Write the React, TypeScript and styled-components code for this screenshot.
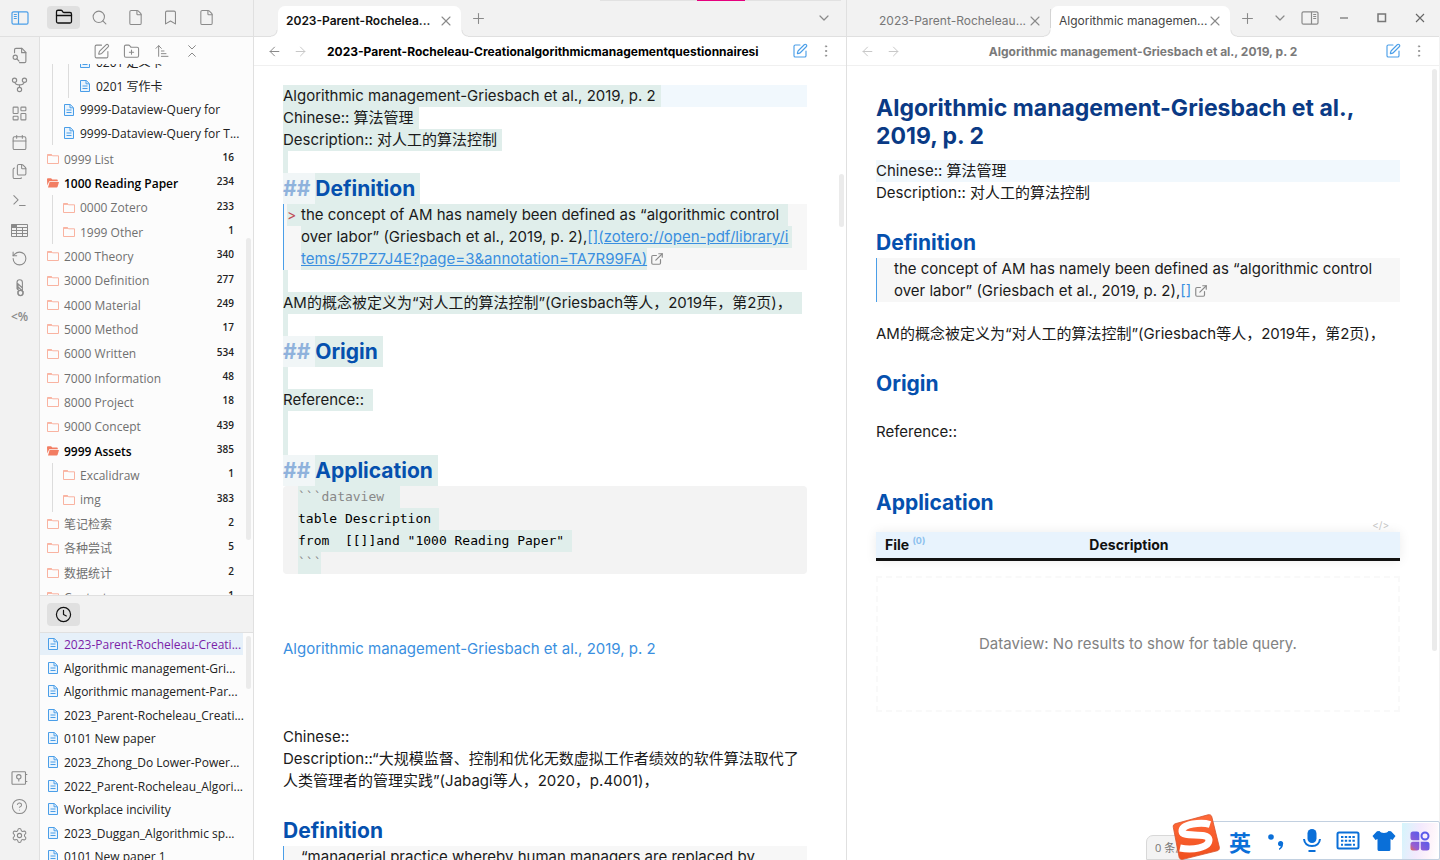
import React from "react";
import styled, { createGlobalStyle, css } from "styled-components";
import {
  ArrowLeft, ArrowRight, ArrowUpNarrowWide, Bookmark, Calendar, ChevronDown, ChevronsDownUp,
  CircleQuestionMark, Clock, EllipsisVertical, ExternalLink, File, Files, FolderClosed,
  FolderPlus, LayoutDashboard, Plus, RotateCcw, Search, Settings, SquarePen, Terminal, X,
} from "lucide-react";

const ui = `"Open Sans", "Noto Sans CJK SC", sans-serif`;
const inter = `Inter, "Noto Sans CJK SC", sans-serif`;
const line = "#e0e0e0";
const blue = "#4a9ee8";
const selection = "#e0eeeb";

const Global = createGlobalStyle`
  *, *::before, *::after { box-sizing: border-box; }
  html, body, #root { height: 100%; }
  body { margin: 0; overflow: hidden; background: #fff; font-family: ${inter}; color: #222; }
  button { border: 0; padding: 0; background: none; font: inherit; color: inherit; cursor: pointer; }
  h1, h2, p { margin: 0; }
`;

const Shell = styled.div`
  position: relative;
  display: flex;
  height: 100vh;
  overflow: hidden;
`;

const LeftArea = styled.div`
  display: grid;
  grid-template: 37px 1fr / 40px 214px;
  flex: none;
  height: 100%;
  background: #f2f2f2;
`;

const IconButton = styled.button<{ $color?: string; $w?: number; $h?: number; $on?: boolean }>`
  display: flex;
  align-items: center;
  justify-content: center;
  flex: none;
  width: ${(p) => p.$w ?? 26}px;
  height: ${(p) => p.$h ?? 24}px;
  color: ${(p) => p.$color ?? "#8a8a8a"};
  ${(p) => p.$on && css`background: #e0e0e0; border-radius: 4px; color: #111;`}
`;

const Corner = styled.div`
  display: flex;
  align-items: center;
  justify-content: center;
  border-bottom: 1px solid ${line};
`;

const SideTabs = styled.div`
  display: flex;
  align-items: center;
  justify-content: space-between;
  padding: 0 30px 2px 7px;
  border-right: 1px solid ${line};
  border-bottom: 1px solid ${line};
`;

const Ribbon = styled.nav`
  display: flex;
  flex-direction: column;
  align-items: center;
  padding: 4px 0 10px;
  border-right: 1px solid ${line};
`;

const Spacer = styled.div`
  flex: 1;
`;

const TemplaterMark = styled.span`
  font: 600 12px/16px ${ui};
`;

const Sidebar = styled.aside`
  display: flex;
  flex-direction: column;
  min-height: 0;
  background: #fcfcfc;
  border-right: 1px solid ${line};
  font-family: ${ui};
  font-size: 12px;
`;

const NavActions = styled.div`
  display: flex;
  justify-content: center;
  gap: 4px;
  flex: none;
  height: 27px;
  padding: 2px 0 0;
`;

const Scroller = styled.div<{ $grow: number }>`
  position: relative;
  flex: ${(p) => p.$grow} 1 0;
  min-height: 0;
  overflow: hidden;
`;

const Thumb = styled.div<{ $top: number; $height: number }>`
  position: absolute;
  top: ${(p) => p.$top}px;
  right: 2px;
  width: 5px;
  height: ${(p) => p.$height}px;
  border-radius: 3px;
  background: #ebebeb;
`;

const FileList = styled.div`
  margin-top: -14px;
`;

const FolderList = styled.div`
  margin-top: 2px;
`;

const Row = styled.a<{ $kind: "file" | "folder" }>`
  display: flex;
  align-items: center;
  height: 24px;
  padding: 0 19px 0 7px;
  color: #222;
  text-decoration: none;
  white-space: nowrap;
  &:nth-child(3n) {
    height: ${(p) => (p.$kind === "file" ? 23 : 25)}px;
  }
`;

const Guide = styled.span`
  align-self: stretch;
  flex: none;
  width: 11px;
  margin-left: 5px;
  border-left: 1px solid #dcdcdc;
`;

const RowName = styled.span<{ $tone?: "muted" | "open" }>`
  margin-left: 5px;
  ${(p) => p.$tone === "muted" && css`color: #707070;`}
  ${(p) => p.$tone === "open" && css`color: #000; font-weight: 600;`}
`;

const Count = styled.span`
  margin-left: auto;
  padding-bottom: 4px;
  font-size: 10px;
  font-weight: 600;
  color: #222;
`;

const RecentTabs = styled.div`
  display: flex;
  align-items: center;
  flex: none;
  height: 38px;
  padding: 0 7px;
  background: #f2f2f2;
  border-top: 1px solid ${line};
  border-bottom: 1px solid ${line};
`;

const RecentRow = styled.a<{ $active?: boolean }>`
  display: flex;
  align-items: center;
  height: 22px;
  margin: 0 10px 2px 0;
  padding-left: 7px;
  color: #222;
  text-decoration: none;
  white-space: nowrap;
  &:nth-child(5n + 2), &:nth-child(5n + 4) { margin-bottom: 1px; }
  ${(p) => p.$active && css`background: #e6f0f9; color: #7b1fa8;`}
`;

const Pane = styled.section`
  display: flex;
  flex-direction: column;
  flex: 1 1 0;
  min-width: 0;
  border-right: 1px solid ${line};
  &:last-of-type { border-right-color: #f2f2f2; }
`;

const TabBar = styled.header`
  position: relative;
  display: flex;
  align-items: center;
  flex: none;
  height: 37px;
  padding-left: 24px;
  background: #f2f2f2;
  border-bottom: 1px solid ${line};
`;

const Tab = styled.div<{ $active?: boolean; $strong?: boolean }>`
  position: relative;
  display: flex;
  align-items: center;
  align-self: flex-end;
  flex: none;
  width: ${(p) => (p.$strong ? 183 : 179)}px;
  height: 31px;
  margin-bottom: -1px;
  padding: 0 7px 2px 8px;
  border-radius: 7px 7px 0 0;
  font-size: 12px;
  font-weight: ${(p) => (p.$strong ? 600 : 400)};
  color: ${(p) => (p.$strong ? "#111" : p.$active ? "#444" : "#777")};
  ${(p) => p.$active && css`
    background: #fff;
    &::before, &::after {
      content: "";
      position: absolute;
      bottom: 0;
      width: 7px;
      height: 7px;
    }
    &::before { left: -7px; background: radial-gradient(circle at 0 0, transparent 5px, ${line} 6px, #fff 7px); }
    &::after { right: -7px; background: radial-gradient(circle at 100% 0, transparent 5px, ${line} 6px, #fff 7px); }
  `}
`;

const TabName = styled.span`
  flex: 1;
  white-space: nowrap;
`;

const TabDivider = styled.span`
  width: 1px;
  height: 19px;
  background: #d4d4d4;
`;

const Progress = styled.div`
  position: absolute;
  top: 0;
  right: 5px;
  display: flex;
  justify-content: center;
  width: 241px;
  height: 1px;
  background: #e2e2e2;
  &::after { content: ""; width: 48px; background: #e6007e; }
`;

const ViewHeader = styled.div`
  display: flex;
  align-items: center;
  flex: none;
  height: 29px;
  padding: 0 7px;
  border-bottom: 1px solid #f0f0f0;
`;

const ViewTitle = styled.div<{ $muted?: boolean }>`
  flex: 1;
  min-width: 0;
  overflow: hidden;
  white-space: nowrap;
  font-size: 12px;
  font-weight: 700;
  ${(p) => p.$muted
    ? css`color: #7a7a7a; text-align: center; margin: 0 14px;`
    : css`color: #000; margin: 0 8px 0 14px;`}
`;

const View = styled.div`
  position: relative;
  flex: 1;
  min-height: 0;
  overflow: hidden;
  font-size: 15px;
  font-weight: 400;
  line-height: 22px;
`;

const Doc = styled.article<{ $top: number }>`
  padding: ${(p) => p.$top}px 39px 0 29px;
`;

const Line = styled.p<{ $current?: boolean }>`
  min-height: 22px;
  white-space: pre;
  color: #1a1a1a;
  ${(p) => p.$current && css`background: #f1f8fd;`}
`;

const Sel = styled.span<{ $trail?: number; $light?: boolean }>`
  display: inline-block;
  vertical-align: top;
  min-height: 22px;
  padding-right: ${(p) => p.$trail ?? 5}px;
  background: ${(p) => (p.$light ? "#f1f6f7" : selection)};
`;

const Heading = styled.h2`
  height: 31px;
  font-size: 21px;
  font-weight: 700;
  line-height: 31px;
  color: #0550ae;
  white-space: pre;
`;

const Hash = styled.span`
  color: #8fb2dc;
`;

const Quote = styled.blockquote<{ $raw?: boolean }>`
  margin: 0;
  padding-left: ${(p) => (p.$raw ? 3 : 17)}px;
  background: #f7f7f7;
  border-left: 1px solid ${blue};
`;

const Indented = styled.div`
  padding-left: 14px;
`;

const Mark = styled.span`
  display: inline-block;
  width: 14px;
  color: #c0505a;
  font-size: 14px;
`;

const Link = styled.a<{ $plain?: boolean }>`
  color: #3a8fe0;
  text-decoration: ${(p) => (p.$plain ? "none" : "underline")};
`;

const External = styled(ExternalLink)`
  margin-left: 3px;
  vertical-align: -2px;
  color: #8a8a8a;
`;

const Code = styled.pre`
  margin: 0;
  padding: 0 15px;
  background: #f3f3f3;
  border-radius: 4px;
  font: 13px/22px "DejaVu Sans Mono", monospace;
  color: #000;
`;

const Fence = styled.span`
  color: #888;
`;

const Gap = styled.div<{ $h: number }>`
  height: ${(p) => p.$h}px;
`;

const Title = styled.h1`
  margin-bottom: 10px;
  font-size: 23px;
  font-weight: 700;
  line-height: 28px;
  color: #0a3a85;
`;

const CodeToggle = styled.button`
  display: block;
  margin: 0 11px 1px auto;
  font-size: 10px;
  font-weight: 400;
  line-height: 12px;
  color: #c4c4c4;
`;

const Table = styled.table`
  width: 100%;
  border-collapse: collapse;
  table-layout: fixed;
  background: #e8f3fd;
  box-shadow: 0 0 12px rgba(0, 0, 0, 0.08);
  th {
    height: 27px;
    padding: 0 9px;
    border-bottom: 3px solid #111;
    text-align: left;
    font-size: 14px;
    font-weight: 700;
    line-height: 22px;
    color: #111;
  }
  th:first-child { width: 39%; }
  sup { font-size: 9px; line-height: 9px; color: #8cc0ee; }
`;

const Empty = styled.div`
  display: flex;
  align-items: center;
  justify-content: center;
  height: 136px;
  margin-top: 15px;
  border: 2px dashed #f9f9f9;
  color: #828282;
`;

const StatusBar = styled.footer`
  position: absolute;
  right: 0;
  bottom: 0;
  width: 294px;
  height: 25px;
  padding: 0 8px;
  border: 1px solid #d8d8d8;
  border-radius: 7px 0 0 0;
  background: #f3f3f3;
  font: 11px/23px ${ui};
  color: #777;
`;

const InputBar = styled.div`
  position: absolute;
  right: 0;
  bottom: 0;
  display: flex;
  align-items: center;
  width: 257px;
  height: 39px;
  padding-left: 38px;
  border: 1px solid #c2d0e0;
  border-radius: 2px;
  background: #fff;
  color: #0a6fd8;
`;

const Ime = styled.button<{ $glow?: boolean }>`
  display: flex;
  align-items: center;
  justify-content: center;
  width: 36px;
  height: 36px;
  font: 700 22px/34px "Noto Sans CJK SC", sans-serif;
  ${(p) => p.$glow && css`background: linear-gradient(100deg, #d4f5fb, #f3e9fd 45%, #fdf3fa 75%, #fff);`}
`;

const Sogou = styled.svg`
  position: absolute;
  right: 219px;
  bottom: 0;
`;

const Glyph = styled.svg`
  flex: none;
`;

const FileIcon = () => (
  <Glyph width="12" height="12" viewBox="0 0 12 12" fill="#eaf4fd" stroke={blue} strokeWidth="1">
    <path d="M1.5.5h5.8l3.2 3.2v7.8h-9z" />
    <path d="M7 .8v3h3.2M3.5 6h5M3.5 8.500h5" fill="none" />
  </Glyph>
);

const FolderIcon = ({ open }: { open?: boolean }) =>
  open ? (
    <Glyph width="12" height="12" viewBox="0 0 12 12" fill="#f27d62">
      <path d="M0 2.2C0 1.6.3 1.3.9 1.3h3.2l1.2 1.2h4.6c.6 0 .9.3.9.9v.8H2.2L.3 8.6z" />
      <path d="M2.6 5H12l-1.4 4.7c-.2.5-.4.7-.9.7H1z" />
    </Glyph>
  ) : (
    <Glyph width="12" height="12" viewBox="0 0 12 12" fill="none" stroke="#f9b3a1" strokeWidth="1">
      <path d="M.5 10.5v-9h4l1 1.3h6v7.7z" />
      <path d="M.5 2.2h4.5" strokeWidth="1.4" />
    </Glyph>
  );

const PanelIcon = ({ flip }: { flip?: boolean }) => (
  <svg width="18" height="14" viewBox="0 0 18 14" fill="none" stroke="currentColor" transform={flip ? "scale(-1 1)" : undefined}>
    <rect x="1" y=".8" width="16" height="12.4" rx="1.5" strokeWidth="1.2" />
    <path d="M7.5 1v12" strokeWidth="1.2" />
    <path d="M2.8 3.5h3M2.8 5.5h3M2.8 7.5h3" />
  </svg>
);

const FindFileIcon = () => (
  <svg width="17" height="17" viewBox="0 0 24 24" fill="none" stroke="currentColor" strokeWidth="1.6" strokeLinecap="round" strokeLinejoin="round">
    <path d="M5 8V4a2 2 0 0 1 2-2h8.500L21 7.500V20a2 2 0 0 1-2 2h-7" />
    <path d="M15 2v6h6" />
    <circle cx="6" cy="14.500" r="3" />
    <path d="m8.200 16.800 3 3" />
  </svg>
);

const GraphIcon = () => (
  <svg width="17" height="17" viewBox="0 0 24 24" fill="none" stroke="currentColor" strokeWidth="1.600">
    <circle cx="5" cy="6" r="3" />
    <circle cx="19" cy="6" r="3" />
    <circle cx="12" cy="19" r="3" />
    <path d="M5.500 9c.5 2.500 2 3.500 6.500 3.500S18 11.500 18.500 9M12 12.500V16" />
  </svg>
);

const GridIcon = () => (
  <svg width="17" height="14" viewBox="0 0 17 14" fill="none" stroke="currentColor">
    <path d="M.5 1.500h16v12H.5zM.5 4.500h16M.5 7.500h16M.5 10.500h16M5.500 1.500v12M11.500 4.500v9" />
    <path d="M.5 2.500h4.500" strokeWidth="3" />
  </svg>
);

const ClipIcon = () => (
  <svg width="12" height="18" viewBox="0 0 12 18" fill="none" stroke="currentColor" strokeWidth="1.1">
    <path d="M3 10V3.500a2.700 2.700 0 0 1 5.400 0V13M3 4l5.500 5M3 7l6 5.500M4 5.500V14a2.500 2.500 0 0 0 5 0v-2M3 10l2 1.500" />
    <circle cx="6.500" cy="14" r="2.600" />
  </svg>
);

const VaultIcon = () => (
  <svg width="17" height="14" viewBox="0 0 17 14" fill="none" stroke="currentColor" strokeWidth="1.100">
    <rect x="1" y=".7" width="13.500" height="12.600" rx=".8" />
    <circle cx="7.800" cy="5.800" r="2.200" />
    <path d="M7.800 8v2.500M15 3.500h1.300M15 10.500h1.300" />
  </svg>
);

type Node = { name: string; depth?: number; count?: number; open?: boolean };

const files: Node[] = [
  { name: "0201 定义卡", depth: 2 },
  { name: "0201 写作卡", depth: 2 },
  { name: "9999-Dataview-Query for", depth: 1 },
  { name: "9999-Dataview-Query for T...", depth: 1 },
];

const folders: Node[] = [
  { name: "0999 List", count: 16 },
  { name: "1000 Reading Paper", count: 234, open: true },
  { name: "0000 Zotero", count: 233, depth: 1 },
  { name: "1999 Other", count: 1, depth: 1 },
  { name: "2000 Theory", count: 340 },
  { name: "3000 Definition", count: 277 },
  { name: "4000 Material", count: 249 },
  { name: "5000 Method", count: 17 },
  { name: "6000 Written", count: 534 },
  { name: "7000 Information", count: 48 },
  { name: "8000 Project", count: 18 },
  { name: "9000 Concept", count: 439 },
  { name: "9999 Assets", count: 385, open: true },
  { name: "Excalidraw", count: 1, depth: 1 },
  { name: "img", count: 383, depth: 1 },
  { name: "笔记检索", count: 2 },
  { name: "各种尝试", count: 5 },
  { name: "数据统计", count: 2 },
  { name: "Contact", count: 1 },
];

const recent = [
  "2023-Parent-Rocheleau-Creati...",
  "Algorithmic management-Gri...",
  "Algorithmic management-Par...",
  "2023_Parent-Rocheleau_Creati...",
  "0101 New paper",
  "2023_Zhong_Do Lower-Power...",
  "2022_Parent-Rocheleau_Algori...",
  "Workplace incivility",
  "2023_Duggan_Algorithmic sp...",
  "0101 New paper 1",
];

const guides = (n = 0) => Array.from({ length: n }, (_, i) => <Guide key={i} />);

const RawHeading = ({ children }: { children: string }) => (
  <Heading>
    <Sel $light $trail={0}><Hash>## </Hash></Sel><Sel>{children}</Sel>
  </Heading>
);

const thin = { size: 17, strokeWidth: 1.5 };

function SideArea() {
  return (
    <LeftArea>
      <Corner><IconButton $color={blue} aria-label="Toggle sidebar"><PanelIcon /></IconButton></Corner>
      <SideTabs>
        <IconButton $on $w={33} $h={23} aria-label="Files"><FolderClosed size={18} strokeWidth={1.7} /></IconButton>
        <IconButton $w={33} aria-label="Search"><Search {...thin} /></IconButton>
        <IconButton $w={33} aria-label="Outline"><File {...thin} /></IconButton>
        <IconButton $w={33} aria-label="Bookmarks"><Bookmark {...thin} /></IconButton>
        <IconButton $w={33} aria-label="Notes"><File {...thin} /></IconButton>
      </SideTabs>
      <Ribbon>
        <IconButton $h={29} aria-label="Quick switcher"><FindFileIcon /></IconButton>
        <IconButton $h={29} aria-label="Graph view"><GraphIcon /></IconButton>
        <IconButton $h={29} aria-label="Canvas"><LayoutDashboard {...thin} /></IconButton>
        <IconButton $h={29} aria-label="Daily note"><Calendar {...thin} /></IconButton>
        <IconButton $h={29} aria-label="Templates"><Files {...thin} /></IconButton>
        <IconButton $h={29} aria-label="Command palette"><Terminal {...thin} /></IconButton>
        <IconButton $h={29} aria-label="Table"><GridIcon /></IconButton>
        <IconButton $h={29} aria-label="Review"><RotateCcw {...thin} /></IconButton>
        <IconButton $h={29} aria-label="Attachments"><ClipIcon /></IconButton>
        <IconButton $h={29} aria-label="Templater"><TemplaterMark>&lt;%</TemplaterMark></IconButton>
        <Spacer />
        <IconButton $h={29} aria-label="Open vault"><VaultIcon /></IconButton>
        <IconButton $h={29} aria-label="Help"><CircleQuestionMark {...thin} /></IconButton>
        <IconButton $h={29} aria-label="Settings"><Settings {...thin} /></IconButton>
      </Ribbon>
      <Sidebar>
        <NavActions>
          <IconButton aria-label="New note"><SquarePen {...thin} /></IconButton>
          <IconButton aria-label="New folder"><FolderPlus {...thin} /></IconButton>
          <IconButton aria-label="Sort"><ArrowUpNarrowWide {...thin} size={16} /></IconButton>
          <IconButton aria-label="Collapse all"><ChevronsDownUp {...thin} size={16} /></IconButton>
        </NavActions>
        <Scroller $grow={531}>
          <FileList>
            {files.map((f) => (
              <Row key={f.name} href="#" $kind="file">
                {guides(f.depth)}<FileIcon /><RowName>{f.name}</RowName>
              </Row>
            ))}
          </FileList>
          <FolderList>
            {folders.map((f) => (
              <Row key={f.name} href="#" $kind="folder">
                {guides(f.depth)}<FolderIcon open={f.open} />
                <RowName $tone={f.open ? "open" : "muted"}>{f.name}</RowName>
                <Count>{f.count}</Count>
              </Row>
            ))}
          </FolderList>
          <Thumb $top={174} $height={302} />
        </Scroller>
        <RecentTabs>
          <IconButton $on $w={33} $h={23} aria-label="Recent files"><Clock size={17} strokeWidth={1.7} /></IconButton>
        </RecentTabs>
        <Scroller $grow={227}>
          {recent.map((name, i) => (
            <RecentRow key={name} href="#" $active={i === 0}><FileIcon /><RowName>{name}</RowName></RecentRow>
          ))}
          <Thumb $top={3} $height={53} />
        </Scroller>
      </Sidebar>
    </LeftArea>
  );
}

const CloseTab = () => <IconButton $w={16} aria-label="Close tab"><X size={16} strokeWidth={1.6} /></IconButton>;

const Nav = ({ back }: { back?: boolean }) => (
  <>
    <IconButton $color={back ? "#8a8a8a" : "#c8c8c8"} aria-label="Back"><ArrowLeft size={15} strokeWidth={1.6} /></IconButton>
    <IconButton $color="#c8c8c8" aria-label="Forward"><ArrowRight size={15} strokeWidth={1.6} /></IconButton>
  </>
);

const Actions = () => (
  <>
    <IconButton $color={blue} aria-label="Edit"><SquarePen size={16} strokeWidth={1.7} /></IconButton>
    <IconButton aria-label="More options"><EllipsisVertical size={16} strokeWidth={1.4} /></IconButton>
  </>
);

function EditorPane() {
  return (
    <Pane>
      <TabBar>
        <Tab $active $strong><TabName>2023-Parent-Rochelea...</TabName><CloseTab /></Tab>
        <IconButton $w={34} aria-label="New tab"><Plus {...thin} /></IconButton>
        <Spacer />
        <IconButton $w={44} aria-label="Tab list"><ChevronDown size={16} strokeWidth={1.8} /></IconButton>
        <Progress />
      </TabBar>
      <ViewHeader>
        <Nav back />
        <ViewTitle>2023-Parent-Rocheleau-Creationalgorithmicmanagementquestionnairesi</ViewTitle>
        <Actions />
      </ViewHeader>
      <View>
        <Doc $top={19}>
          <Line $current><Sel>Algorithmic management-Griesbach et al., 2019, p. 2</Sel></Line>
          <Line><Sel>Chinese:: 算法管理</Sel></Line>
          <Line><Sel>Description:: 对人工的算法控制</Sel></Line>
          <Line><Sel /></Line>
          <RawHeading>Definition</RawHeading>
          <Quote $raw>
            <Line><Sel $trail={9}><Mark>&gt;</Mark>the concept of AM has namely been defined as “algorithmic control</Sel></Line>
            <Indented>
              <Line><Sel $trail={4}>over labor” (Griesbach et al., 2019, p. 2),<Link href="#">[](zotero://open-pdf/library/i</Link></Sel></Line>
              <Line><Sel $trail={0}><Link href="#">tems/57PZ7J4E?page=3&amp;annotation=TA7R99FA)</Link></Sel><External size={14} /></Line>
            </Indented>
          </Quote>
          <Line><Sel /></Line>
          <Line><Sel $trail={10}>AM的概念被定义为“对人工的算法控制”(Griesbach等人，2019年，第2页)，</Sel></Line>
          <Line><Sel /></Line>
          <RawHeading>Origin</RawHeading>
          <Line><Sel /></Line>
          <Line><Sel $trail={9}>Reference::</Sel></Line>
          <Line><Sel /></Line>
          <Line><Sel /></Line>
          <RawHeading>Application</RawHeading>
          <Code>
            <Sel $trail={16}><Fence>```dataview</Fence></Sel>{"\n"}
            <Sel $trail={8}>table Description</Sel>{"\n"}
            <Sel $trail={8}>from  [[]]and "1000 Reading Paper"</Sel>{"\n"}
            <Sel $trail={0}><Fence>```</Fence></Sel>
          </Code>
          <Gap $h={64} />
          <Line><Link $plain href="#">Algorithmic management-Griesbach et al., 2019, p. 2</Link></Line>
          <Gap $h={66} />
          <Line>Chinese::</Line>
          <Line>Description::“大规模监督、控制和优化无数虚拟工作者绩效的软件算法取代了</Line>
          <Line>人类管理者的管理实践”(Jabagi等人，2020，p.4001)，</Line>
          <Gap $h={23} />
          <Heading>Definition</Heading>
          <Quote><Line>“managerial practice whereby human managers are replaced by</Line></Quote>
        </Doc>
        <Thumb $top={108} $height={53} />
      </View>
    </Pane>
  );
}

function PreviewPane() {
  return (
    <Pane>
      <TabBar>
        <Tab><TabName>2023-Parent-Rocheleau...</TabName><CloseTab /></Tab>
        <TabDivider />
        <Tab $active><TabName>Algorithmic managemen...</TabName><CloseTab /></Tab>
        <IconButton $w={34} aria-label="New tab"><Plus {...thin} /></IconButton>
        <Spacer />
        <IconButton $w={30} aria-label="Tab list"><ChevronDown size={16} strokeWidth={1.8} /></IconButton>
        <IconButton $w={30} aria-label="Toggle right sidebar"><PanelIcon flip /></IconButton>
        <IconButton $w={38} aria-label="Minimize">
          <svg width="10" height="10" stroke="#888" strokeWidth="1.500"><path d="M1 5h8" /></svg>
        </IconButton>
        <IconButton $w={38} aria-label="Maximize">
          <svg width="10" height="10" fill="none" stroke="#777" strokeWidth="1.500"><path d="M1 1h7.500v7.500H1z" /></svg>
        </IconButton>
        <IconButton $w={38} aria-label="Close">
          <svg width="10" height="10" stroke="#666" strokeWidth="1.100"><path d="M1 1l8 8M9 1L1 9" /></svg>
        </IconButton>
      </TabBar>
      <ViewHeader>
        <Nav />
        <ViewTitle $muted>Algorithmic management-Griesbach et al., 2019, p. 2</ViewTitle>
        <Actions />
      </ViewHeader>
      <View>
        <Doc $top={28}>
          <Title>Algorithmic management-Griesbach et al., 2019, p. 2</Title>
          <Line $current>Chinese:: 算法管理</Line>
          <Line>Description:: 对人工的算法控制</Line>
          <Gap $h={23} />
          <Heading>Definition</Heading>
          <Quote>
            <Line>the concept of AM has namely been defined as “algorithmic control</Line>
            <Line>over labor” (Griesbach et al., 2019, p. 2),<Link $plain href="#">[]</Link><External size={14} /></Line>
          </Quote>
          <Gap $h={21} />
          <Line>AM的概念被定义为“对人工的算法控制”(Griesbach等人，2019年，第2页)，</Line>
          <Gap $h={23} />
          <Heading>Origin</Heading>
          <Gap $h={22} />
          <Line>Reference::</Line>
          <Gap $h={44} />
          <Heading>Application</Heading>
          <Gap $h={1} />
          <CodeToggle>&lt;/&gt;</CodeToggle>
          <Table>
            <thead><tr><th>File <sup>(0)</sup></th><th>Description</th></tr></thead>
          </Table>
          <Empty>Dataview: No results to show for table query.</Empty>
        </Doc>
        <Thumb $top={3} $height={582} />
      </View>
    </Pane>
  );
}

function InputMethod() {
  return (
    <>
      <StatusBar>0 条反向链接</StatusBar>
      <InputBar>
        <Ime>英</Ime>
        <Ime aria-label="Punctuation">
          <svg width="20" height="20" fill="currentColor"><circle cx="5" cy="6" r="2.800" /><path d="M12 12.500a2.600 2.600 0 1 1 5 1c0 2.500-1.500 4.500-4 5.500v-1.500c1-.6 1.600-1.300 1.700-2.300a2.600 2.600 0 0 1-2.700-2.700z" /></svg>
        </Ime>
        <Ime aria-label="Voice">
          <svg width="20" height="26" fill="none" stroke="currentColor" strokeWidth="2"><rect x="5.500" y="1" width="9" height="14" rx="4.500" fill="currentColor" stroke="none" /><path d="M2 11c.5 4.500 3.500 7 8 7s7.500-2.500 8-7M6.500 23h7" /></svg>
        </Ime>
        <Ime aria-label="Keyboard">
          <svg width="24" height="20" fill="none" stroke="currentColor" strokeWidth="2"><rect x="1.500" y="1.500" width="21" height="16" rx="1.500" /><path d="M5 6h14M5 9.800h14" strokeDasharray="2.400 1.400" /><path d="M5 13.800h2M8.500 13.800h7M17 13.800h2" /></svg>
        </Ime>
        <Ime aria-label="Skin">
          <svg width="24" height="22" fill="currentColor"><path d="M7.500 1c1 2.500 8 2.500 9 0l2.500.3L23.500 6l-3 4-2-1v10c0 1.500-.5 2-2 2h-9c-1.500 0-2-.5-2-2V9l-2 1-3-4L5 1.300z" /></svg>
        </Ime>
        <Ime $glow aria-label="Toolbox">
          <svg width="20" height="20">
            <defs><linearGradient id="tool" x1="1" y1="0" x2="0" y2="1"><stop offset=".3" stopColor="#5b5bea" /><stop offset=".8" stopColor="#9a5fd0" /><stop offset="1" stopColor="#e86a50" /></linearGradient></defs>
            <path fill="url(#tool)" d="M3 .5h4a2.300 2.300 0 0 1 2.300 2.300v6.500H3A2.500 2.500 0 0 1 .5 6.800V3A2.500 2.500 0 0 1 3 .5zM3 10.700h6.300v6.500A2.300 2.300 0 0 1 7 19.500H3A2.500 2.500 0 0 1 .5 17v-3.800A2.500 2.500 0 0 1 3 10.700zM10.700 10.700H17a2.500 2.500 0 0 1 2.500 2.500V17a2.500 2.500 0 0 1-2.500 2.500h-4a2.300 2.300 0 0 1-2.300-2.300z" />
            <circle cx="15" cy="5" r="3.500" fill="none" stroke="#5b5bea" strokeWidth="2" />
          </svg>
        </Ime>
      </InputBar>
      <Sogou width="50" height="46" viewBox="0 0 50 46">
        <defs><linearGradient id="logo" x1="0" y1="0" x2="0" y2="1"><stop offset="0" stopColor="#ff6a3a" /><stop offset="1" stopColor="#f0501e" /></linearGradient></defs>
        <path fill="url(#logo)" stroke="#d8532c" strokeWidth=".8" d="M5 9.500 37 .8c2-.5 3.300.2 3.800 2L48.300 33c.4 2-.3 3.300-2.200 3.800L12 45.300c-2 .4-3.400-.3-3.900-2L2.300 13.300c-.4-2 .5-3.200 2.700-3.800z" />
        <path fill="none" stroke="#fff" strokeWidth="7" d="M39 10.500C31 8 10.500 9.500 11 17.500 11.500 24 37 17.500 38 25.500 38.500 34 21 36.500 9 34" />
      </Sogou>
    </>
  );
}

export default function App() {
  return (
    <Shell>
      <Global />
      <SideArea />
      <EditorPane />
      <PreviewPane />
      <InputMethod />
    </Shell>
  );
}
